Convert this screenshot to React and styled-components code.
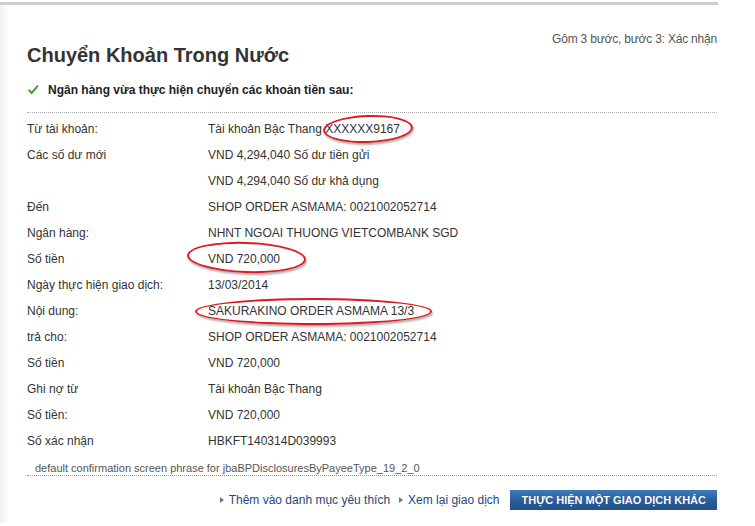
import React from "react";
import styled, { createGlobalStyle } from "styled-components";

const GlobalStyle = createGlobalStyle`
  html, body { margin: 0; padding: 0; background: #fff; }
  body { font-family: "Liberation Sans", Arial, sans-serif; color: #333; }
`;

const Page = styled.div`
  width: 718px;
  margin-top: 2px;
  border-top: 3px solid #cecece;
  min-height: 521px;
  background: linear-gradient(to right, #efefef 0px, #f8f8f8 4px, #fff 9px);
  box-sizing: border-box;
`;

const Content = styled.div`
  padding: 0 1px 0 27px;
`;

const Header = styled.div`
  display: flex;
  justify-content: space-between;
  align-items: flex-start;
`;

const Title = styled.h1`
  margin: 38px 0 0 0;
  font-size: 20px;
  line-height: 24px;
  font-weight: bold;
  color: #333;
`;

const StepInfo = styled.div`
  margin-top: 27px;
  font-size: 12px;
  line-height: 14px;
  letter-spacing: -0.2px;
  color: #555;
`;

const Notice = styled.div`
  display: flex;
  align-items: center;
  gap: 9px;
  margin-top: 15px;
  font-size: 12px;
  line-height: 16px;
  font-weight: bold;
  color: #222;
`;

const Details = styled.div`
  margin-top: 14px;
  border-top: 1px dotted #aaa;
  padding-top: 3px;
`;

const Row = styled.div`
  display: grid;
  grid-template-columns: 181px 1fr;
  font-size: 12px;
  line-height: 26px;
  height: 26px;
  color: #333;
`;

const Label = styled.div``;

const Value = styled.div`
  position: relative;
`;

const Annotation = styled.span`
  position: absolute;
  left: ${(p) => p.$left}px;
  top: ${(p) => p.$top}px;
  width: ${(p) => p.$w}px;
  height: ${(p) => p.$h}px;
  border: 2px solid #dc1a22;
  border-radius: 50%;
  box-sizing: border-box;
  box-shadow: 1px 2px 2px rgba(0, 0, 0, 0.3);
  transform: rotate(${(p) => p.$rot || 0}deg);
  pointer-events: none;
`;

const Footnote = styled.div`
  padding: 7px 0 0 8px;
  font-size: 11px;
  line-height: 14px;
  color: #555;
  border-bottom: 1px dotted #999;
`;

const Actions = styled.div`
  display: flex;
  justify-content: flex-end;
  align-items: center;
  margin-top: 14px;
`;

const LinkItem = styled.a`
  display: flex;
  align-items: center;
  font-size: 12px;
  line-height: 20px;
  color: #24487a;
  text-decoration: none;
  margin-right: ${(p) => p.$gap}px;
  &::before {
    content: "";
    width: 0;
    height: 0;
    border-left: 4px solid #777;
    border-top: 3px solid transparent;
    border-bottom: 3px solid transparent;
    margin-right: 5px;
  }
`;

const PrimaryButton = styled.button`
  height: 20px;
  padding: 0 11px;
  border: 0;
  background: linear-gradient(#3d7bbb, #28599a 60%, #22508c);
  color: #fff;
  font-family: "Liberation Sans", Arial, sans-serif;
  font-size: 11px;
  font-weight: bold;
  line-height: 20px;
  white-space: nowrap;
  text-shadow: 0 0 1px rgba(0, 0, 0, 0.4);
  cursor: pointer;
`;

const CheckIcon = () => (
  <svg width="12" height="12" viewBox="0 0 12 12">
    <path d="M0.8 6.6 L2.4 5.2 L4.6 7.4 L10.2 0.9 L11.6 2.2 L4.7 10.6 Z" fill="#3f9e35" />
  </svg>
);

const rows = [
  { label: "Từ tài khoản:", value: "Tài khoản Bậc Thang XXXXXX9167", mark: { left: 115, top: -1, w: 90, h: 28, rot: -2 } },
  { label: "Các số dư mới", value: "VND 4,294,040 Số dư tiền gửi" },
  { label: "", value: "VND 4,294,040 Số dư khả dụng" },
  { label: "Đến", value: "SHOP ORDER ASMAMA: 0021002052714" },
  { label: "Ngân hàng:", value: "NHNT NGOAI THUONG VIETCOMBANK SGD" },
  { label: "Số tiền", value: "VND 720,000", mark: { left: -21, top: -4, w: 119, h: 31, rot: 2 } },
  { label: "Ngày thực hiện giao dịch:", value: "13/03/2014" },
  { label: "Nội dung:", value: "SAKURAKINO ORDER ASMAMA 13/3", mark: { left: -13, top: 0, w: 237, h: 27, rot: 0 } },
  { label: "trả cho:", value: "SHOP ORDER ASMAMA: 0021002052714" },
  { label: "Số tiền", value: "VND 720,000" },
  { label: "Ghi nợ từ", value: "Tài khoản Bậc Thang" },
  { label: "Số tiền:", value: "VND 720,000" },
  { label: "Số xác nhận", value: "HBKFT140314D039993" },
];

export default function App() {
  return (
    <>
      <GlobalStyle />
      <Page>
        <Content>
          <Header>
            <Title>Chuyển Khoản Trong Nước</Title>
            <StepInfo>Gôm 3 bước, bước 3: Xác nhận</StepInfo>
          </Header>
          <Notice>
            <CheckIcon />
            Ngân hàng vừa thực hiện chuyển các khoản tiền sau:
          </Notice>
          <Details>
            {rows.map((r, i) => (
              <Row key={i}>
                <Label>{r.label}</Label>
                <Value>
                  {r.value}
                  {r.mark && (
                    <Annotation
                      $left={r.mark.left}
                      $top={r.mark.top}
                      $w={r.mark.w}
                      $h={r.mark.h}
                      $rot={r.mark.rot}
                    />
                  )}
                </Value>
              </Row>
            ))}
            <Footnote>
              default confirmation screen phrase for jbaBPDisclosuresByPayeeType_19_2_0
            </Footnote>
          </Details>
          <Actions>
            <LinkItem href="#" $gap={9}>Thêm vào danh mục yêu thích</LinkItem>
            <LinkItem href="#" $gap={11}>Xem lại giao dịch</LinkItem>
            <PrimaryButton>THỰC HIỆN MỘT GIAO DỊCH KHÁC</PrimaryButton>
          </Actions>
        </Content>
      </Page>
    </>
  );
}
